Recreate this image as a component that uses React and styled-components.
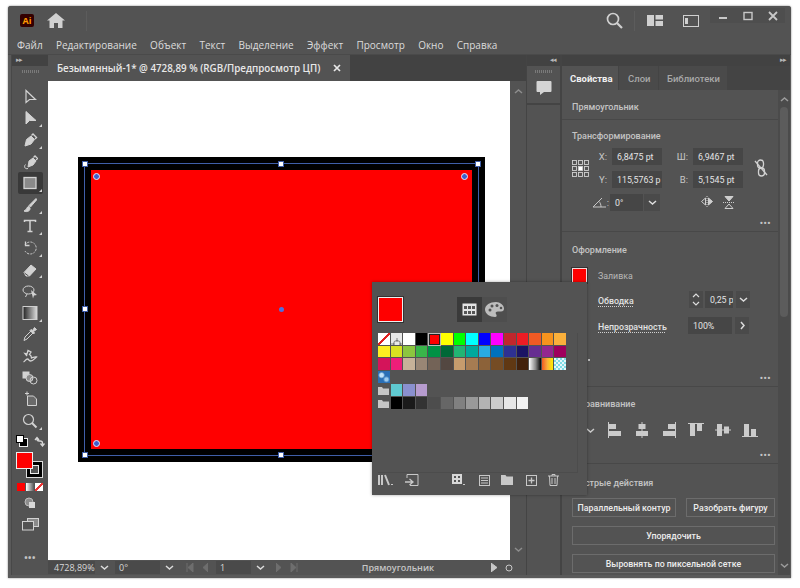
import React from 'react';
import styled, { createGlobalStyle } from 'styled-components';

const GlobalStyle = createGlobalStyle`
  html, body {
    margin: 0;
    padding: 0;
    background: #fff;
    font-family: "Open Sans", "Noto Sans", sans-serif;
  }
`;

const Page = styled.div`
  width: 800px;
  height: 588px;
  padding: 6px 0 0 8px;
  box-sizing: border-box;
  overflow: hidden;
`;

const Window = styled.div`
  position: relative;
  width: 783px;
  height: 572px;
  background: #5a5a5a;
  border-radius: 3px 3px 0 0;
  box-shadow: 0 0 2px rgba(0, 0, 0, 0.55);
  display: flex;
  flex-direction: column;
  overflow: hidden;
`;

const TitleBar = styled.div`
  height: 29px;
  display: flex;
  align-items: center;
  background: #535353;
  color: #d0d0d0;
  flex: none;
`;

const AiLogo = styled.div`
  width: 14px;
  height: 13px;
  margin-left: 12px;
  background: #330000;
  color: #ff9a00;
  border-radius: 2px;
  font-size: 9px;
  font-weight: 700;
  line-height: 13px;
  text-align: center;
`;

const HomeButton = styled.div`
  display: flex;
  margin-left: 13px;
`;

const TitleDivider = styled.div`
  width: 1px;
  height: 20px;
  background: #5c5c5c;
  margin-left: ${p => p.$left || 0}px;
`;

const TitleRight = styled.div`
  margin-left: auto;
  display: flex;
  align-items: center;
  height: 100%;
`;

const TitleIcon = styled.div`
  display: flex;
  margin-left: ${p => p.$left || 0}px;
`;

const WindowButtons = styled.div`
  display: flex;
  align-self: flex-start;
  margin: 2px 6px 0 11px;
  background: #4e4e4e;
`;

const WindowButton = styled.div`
  width: 25px;
  height: 15px;
  display: flex;
  align-items: center;
  justify-content: center;
  color: #c8c8c8;
`;

const MenuBar = styled.div`
  height: 20px;
  flex: none;
  display: flex;
  align-items: center;
  gap: 13.300px;
  padding-left: 9px;
  background: #535353;
  border-bottom: 1px solid #4a4a4a;
  box-sizing: border-box;
`;

const MenuItem = styled.span`
  color: #dcdcdc;
  font-size: 10px;
  line-height: 1;
`;

const Workspace = styled.div`
  flex: 1;
  min-height: 0;
  display: flex;
  padding: 0 1px 3px 3px;
`;

const ToolPanel = styled.div`
  width: 37px;
  flex: none;
  display: flex;
  flex-direction: column;
  align-items: center;
  background: #535353;
  border-left: 1px solid #484848;
  box-sizing: border-box;
`;

const DockHeader = styled.div`
  height: 11px;
  width: 100%;
  flex: none;
  background: #424242;
  color: #b8b8b8;
  font-size: 7px;
  line-height: 10px;
  padding: 0 4px;
  box-sizing: border-box;
  text-align: ${p => p.$align || 'left'};
  letter-spacing: -1px;
`;

const Gripper = styled.div`
  width: 17px;
  height: 3px;
  margin: 4px auto 0;
  flex: none;
  background: repeating-linear-gradient(90deg, #7a7a7a 0 1px, transparent 1px 2px);
`;

const ToolList = styled.div`
  margin-top: 13px;
  display: flex;
  flex-direction: column;
  align-items: center;
`;

const Tool = styled.div`
  position: relative;
  width: 25px;
  height: 21.6px;
  flex: none;
  margin-top: ${p => p.$top || 0}px;
  display: flex;
  align-items: center;
  justify-content: center;
  color: #d2d2d2;
  border-radius: 2px;
  background: ${p => (p.$active ? '#393939' : 'transparent')};
  &::after {
    content: '';
    display: ${p => (p.$more ? 'block' : 'none')};
    position: absolute;
    right: 1px;
    bottom: 2px;
    width: 0;
    height: 0;
    border-left: 3px solid transparent;
    border-bottom: 3px solid #d2d2d2;
  }
`;

const ColorWidget = styled.div`
  position: relative;
  width: 28px;
  height: 40px;
  margin-top: 5px;
  flex: none;
`;

const SwapRow = styled.div`
  display: flex;
  justify-content: space-between;
  width: 29px;
  margin-top: 3px;
  color: #d8d8d8;
`;

const FillChip = styled.div`
  position: absolute;
  left: 0;
  top: 0;
  width: 15px;
  height: 15px;
  background: #f00;
  border: 1px solid #eee;
  z-index: 1;
`;

const StrokeChip = styled.div`
  position: absolute;
  left: 10px;
  top: 9px;
  width: 15px;
  height: 15px;
  background: #000;
  border: 1px solid #ddd;
  &::after {
    content: '';
    position: absolute;
    inset: 3px;
    background: #535353;
    border: 1px solid #eee;
  }
`;

const ModeRow = styled.div`
  display: flex;
  gap: 1px;
  margin-top: -9px;
`;

const ModeChip = styled.div`
  width: 8px;
  height: 8px;
  background: ${p => p.$fill};
`;

const Dots = styled.div`
  color: #c4c4c4;
  font-size: 9px;
  font-weight: 700;
  letter-spacing: 0.5px;
  line-height: 8px;
`;

const ToolDots = styled(Dots)`
  margin-top: auto;
  margin-bottom: 13px;
`;

const DocArea = styled.div`
  width: 478px;
  flex: none;
  display: flex;
  flex-direction: column;
`;

const DocTabs = styled.div`
  height: 26px;
  flex: none;
  display: flex;
  background: #424242;
`;

const DocTab = styled.div`
  width: 302px;
  display: flex;
  align-items: center;
  justify-content: space-between;
  padding: 0 9px;
  box-sizing: border-box;
  background: #535353;
  color: #e8e8e8;
  font-size: 9.800px;
  font-weight: 600;
  white-space: nowrap;
`;

const CanvasRow = styled.div`
  flex: 1;
  min-height: 0;
  display: flex;
`;

const Canvas = styled.div`
  position: relative;
  flex: 1;
  background: #fff;
`;

const ScrollBar = styled.div`
  width: ${p => p.$width}px;
  flex: none;
  display: flex;
  flex-direction: column;
  align-items: center;
  justify-content: space-between;
  padding: 5px 0;
  box-sizing: border-box;
  background: #535353;
  color: #8d8d8d;
`;

const ArtObject = styled.div`
  position: absolute;
  left: 30px;
  top: 76px;
  width: 407px;
  height: 305px;
  background: #000;
`;

const RedFill = styled.div`
  position: absolute;
  inset: 13px;
  background: #f00;
`;

const SelectionBox = styled.div`
  position: absolute;
  inset: 6px;
  border: 1px solid #3f5ea8;
`;

const Handle = styled.div`
  position: absolute;
  left: ${p => p.$x}%;
  top: ${p => p.$y}%;
  width: 6px;
  height: 6px;
  margin: -3.500px 0 0 -3.500px;
  background: #fff;
  border: 1px solid #3f5ea8;
  box-sizing: border-box;
`;

const CornerWidget = styled.div`
  position: absolute;
  left: ${p => p.$x}px;
  top: ${p => p.$y}px;
  width: 7px;
  height: 7px;
  border-radius: 50%;
  background: #3f5ecc;
  border: 1.500px solid #e6e9ff;
  box-sizing: border-box;
`;

const CenterPoint = styled.div`
  position: absolute;
  left: 50%;
  top: 50%;
  width: 5px;
  height: 5px;
  margin: -3px 0 0 -3px;
  border-radius: 50%;
  background: #4f6fe0;
`;

const StatusBar = styled.div`
  height: 15px;
  flex: none;
  display: flex;
  align-items: center;
  background: #535353;
  color: #d8d8d8;
  font-size: 9px;
`;

const StatusField = styled.div`
  width: ${p => p.$width}px;
  height: 13px;
  margin-left: ${p => p.$gap || 0}px;
  display: flex;
  align-items: center;
  padding-left: ${p => p.$pad || 4}px;
  box-sizing: border-box;
  background: #4a4a4a;
  flex: none;
`;

const StatusCaret = styled.div`
  width: ${p => p.$width || 17}px;
  height: 13px;
  margin-left: 1px;
  display: flex;
  align-items: center;
  justify-content: center;
  flex: none;
  color: #dcdcdc;
`;

const StatusNav = styled.div`
  display: flex;
  align-items: center;
  justify-content: ${p => p.$justify || 'center'};
  gap: 8px;
  width: ${p => p.$width}px;
  flex: none;
  color: ${p => p.$color || '#6e6e6e'};
`;

const StatusTitle = styled.div`
  flex: 1;
  text-align: center;
  color: #c6c6c6;
  font-size: 9px;
  font-weight: 600;
`;

const CommentDock = styled.div`
  width: 34px;
  flex: none;
  background: #535353;
  border-left: 1px solid #444;
  box-sizing: border-box;
`;

const CommentButton = styled.div`
  height: 30px;
  display: flex;
  align-items: center;
  justify-content: center;
  border-bottom: 2px solid #444;
  color: #d4d4d4;
`;

const DockGap = styled.div`
  width: 2px;
  flex: none;
  background: #444;
`;

const PropertiesDock = styled.div`
  flex: 1;
  min-width: 0;
  display: flex;
  flex-direction: column;
  background: #535353;
  font-family: Roboto, "Open Sans", sans-serif;
`;

const TabRow = styled.div`
  height: 24px;
  flex: none;
  display: flex;
  background: #444;
`;

const PanelTab = styled.div`
  width: ${p => p.$width}px;
  padding-left: ${p => p.$pad}px;
  box-sizing: border-box;
  display: flex;
  align-items: center;
  font-size: 9.500px;
  font-weight: ${p => (p.$active ? 700 : 500)};
  color: ${p => (p.$active ? '#f0f0f0' : '#a8a8a8')};
  background: ${p => (p.$active ? '#535353' : '#4a4a4a')};
  border-right: 1px solid #444;
`;

const PanelBody = styled.div`
  flex: 1;
  min-height: 0;
  display: flex;
  overflow: hidden;
`;

const PanelContent = styled.div`
  width: 216px;
  flex: none;
`;

const PanelScroll = styled.div`
  flex: 1;
  display: flex;
  flex-direction: column;
  align-items: center;
  justify-content: space-between;
  padding: 4px 0;
  box-sizing: border-box;
  background: #4b4b4b;
  color: #9c9c9c;
`;

const ScrollThumb = styled.div`
  width: 8px;
  height: 210px;
  border-radius: 4px;
  background: #5c5c5c;
  margin: 2px 0 auto;
`;

const Section = styled.section`
  height: ${p => p.$height}px;
  padding: ${p => p.$top || 9}px 0 0 10px;
  box-sizing: border-box;
  position: relative;
  border-bottom: ${p => (p.$last ? 'none' : '1px solid #484848')};
`;

const SectionTitle = styled.div`
  color: #c4c4c4;
  font-size: 9px;
  font-weight: 500;
  line-height: 13px;
`;

const SectionDots = styled(Dots)`
  position: absolute;
  right: 7px;
  bottom: ${p => p.$bottom || 4}px;
`;

const MoreTick = styled.div`
  position: absolute;
  left: 26px;
  top: 127px;
  width: 2px;
  height: 2px;
  background: #bbb;
`;

const TransformGrid = styled.div`
  display: grid;
  grid-template-columns: 22px 18px 50px 31px 50px 1fr;
  grid-template-rows: 17px 17px 17px;
  row-gap: 6px;
  margin-top: 5px;
  align-items: center;
`;

const Label = styled.span`
  grid-column: ${p => p.$col || 'auto'};
  justify-self: end;
  padding-right: ${p => p.$pad ?? 5}px;
  font-size: 9.500px;
  color: #c6c6c6;
`;

const InputBox = styled.div`
  height: 17px;
  flex: none;
  grid-column: ${p => p.$col || 'auto'};
  display: flex;
  align-items: center;
  padding-left: 5px;
  margin-left: ${p => p.$left || 0}px;
  box-sizing: border-box;
  background: #464646;
  color: #e4e4e4;
  font-size: 8.800px;
  white-space: nowrap;
  overflow: hidden;
  width: ${p => (p.$width ? `${p.$width}px` : 'auto')};
`;

const AnchorCell = styled.div`
  grid-row: 1 / span 2;
  grid-column: 1;
  align-self: center;
  display: flex;
  color: #cfcfcf;
`;

const LinkCell = styled.div`
  grid-row: 1 / span 2;
  grid-column: 6;
  display: flex;
  justify-content: center;
  color: #d2d2d2;
`;

const AngleCell = styled.div`
  grid-column: 1 / span 3;
  display: flex;
  align-items: center;
  justify-content: flex-end;
  padding-right: 2px;
  color: #c6c6c6;
`;

const FlipCell = styled.div`
  grid-column: 5;
  display: flex;
  justify-content: center;
  gap: 10px;
  color: #cfcfcf;
`;

const DarkSquare = styled.div`
  width: ${p => p.$width || 16}px;
  height: 17px;
  flex: none;
  margin-left: ${p => p.$gap || 1}px;
  display: flex;
  align-items: center;
  justify-content: center;
  background: #4a4a4a;
  color: #dcdcdc;
`;

const AppearanceRow = styled.div`
  display: flex;
  align-items: center;
  height: 17px;
  margin-top: ${p => p.$top || 0}px;
  margin-bottom: ${p => p.$gap || 0}px;
`;

const RowLabel = styled.span`
  width: 90px;
  margin: 3px 0 0 26px;
  flex: none;
  color: #e2e2e2;
  font-size: 8.800px;
  font-weight: 500;
  line-height: 12px;
  text-decoration: underline dotted #d0d0d0;
  text-underline-offset: 2px;
`;

const FillLabel = styled(RowLabel)`
  width: auto;
  color: #b8b8b8;
  font-weight: 400;
  text-decoration: none;
  margin: 0 0 0 11px;
`;

const FillSwatch = styled.div`
  width: 15px;
  height: 15px;
  background: #f00;
  border: 1px solid #f2d9d9;
  outline: 1px solid #333;
  box-sizing: border-box;
`;

const ListGlyph = styled.div`
  display: flex;
  height: 9px;
  margin-top: 1px;
  color: #d2d2d2;
`;

const AlignRow = styled.div`
  display: flex;
  align-items: center;
  gap: 11px;
  margin: 11px 0 0 13px;
  color: #cbcbcb;
`;

const ButtonRow = styled.div`
  display: flex;
  gap: 10px;
  margin-bottom: 9px;
`;

const ActionButton = styled.div`
  flex: ${p => p.$grow || 'none'};
  width: ${p => (p.$width ? `${p.$width}px` : 'auto')};
  height: 19px;
  display: flex;
  align-items: center;
  justify-content: center;
  box-sizing: border-box;
  border: 1px solid #6c6c6c;
  color: #ececec;
  font-size: 8.800px;
  font-weight: 500;
  white-space: nowrap;
`;

const ActionList = styled.div`
  width: 203px;
  margin-top: 8px;
`;

const SwatchPopup = styled.div`
  position: absolute;
  left: 364px;
  top: 276px;
  width: 215px;
  height: 213px;
  background: #535353;
  box-shadow: 0 0 3px rgba(0, 0, 0, 0.35);
  z-index: 5;
  display: flex;
  flex-direction: column;
  padding: 15px 9px 0 6px;
  box-sizing: border-box;
`;

const PopupTop = styled.div`
  display: flex;
  height: 25px;
  flex: none;
`;

const BigSwatch = styled.div`
  width: 25px;
  height: 25px;
  background: #f00;
  border: 1px solid #eee;
  outline: 1px solid #333;
  box-sizing: border-box;
`;

const ViewToggle = styled.div`
  width: 25px;
  height: 25px;
  margin-left: ${p => p.$gap || 0}px;
  display: flex;
  align-items: center;
  justify-content: center;
  background: ${p => (p.$active ? '#3a3a3a' : '#4e4e4e')};
  color: #d4d4d4;
`;

const SwatchArea = styled.div`
  height: 139px;
  flex: none;
  margin-top: 11px;
  border-right: 1px solid #4c4c4c;
  border-bottom: 1px solid #4c4c4c;
`;

const SwatchRow = styled.div`
  display: flex;
  height: 12.700px;
`;

const Swatch = styled.div`
  width: 12.600px;
  height: 12.700px;
  flex: none;
  box-sizing: border-box;
  position: relative;
  background: ${p => p.$fill};
  border: 1px solid #535353;
  border-width: 0 0.500px 0.500px 0;
`;

const CurrentSwatch = styled(Swatch)`
  background: #f00;
  border: 2px solid #222;
  outline: 1px solid #bbb;
  outline-offset: -1px;
`;

const FolderRow = styled.div`
  display: flex;
  align-items: center;
  height: 13px;
`;

const FolderSlot = styled.div`
  width: 12.600px;
  display: flex;
  color: #c6c6c6;
  flex: none;
`;

const PopupFooter = styled.div`
  flex: 1;
  display: flex;
  align-items: center;
  color: #c8c8c8;
  padding-bottom: 9px;
`;

const FooterIcon = styled.div`
  display: flex;
  flex: none;
  margin-left: ${p => p.$gap}px;
`;

const menuItems = ['Файл', 'Редактирование', 'Объект', 'Текст', 'Выделение', 'Эффект', 'Просмотр', 'Окно', 'Справка'];

const swatchRows = [
  [null, null, '#ffffff', '#000000', null, '#ffff00', '#00ff00', '#00ffff', '#0000ff', '#ff00ff', '#c1272d', '#ed1c24', '#f15a24', '#f7931e', '#fbb03b'],
  ['#fcee21', '#d9e021', '#8cc63f', '#39b54a', '#009245', '#006837', '#22b573', '#00a99d', '#29abe2', '#0071bc', '#2e3192', '#1b1464', '#662d91', '#93278f', '#9e005d'],
  ['#d4145a', '#ed1e79', '#c7b299', '#998675', '#736357', '#534741', '#c69c6d', '#a67c52', '#8c6239', '#754c24', '#603813', '#42210b', 'linear-gradient(90deg,#fff,#888 55%,#000)', 'linear-gradient(90deg,#f15a24,#fbb03b 50%,#ffee00)', 'repeating-conic-gradient(#7fdde6 0 25%,#e6f8fa 0 50%) 0 0/4px 4px'],
];

const groupOne = ['#5fc9d0', '#8a90cf', '#b79ccf'];
const groupTwo = ['#000000', '#1a1a1a', '#333333', '#4d4d4d', '#666666', '#808080', '#999999', '#b3b3b3', '#cccccc', '#e6e6e6', '#f2f2f2'];

const Svg = ({ w = 16, h = 16, children, box }) => (
  <svg width={w} height={h} viewBox={box || `0 0 ${w} ${h}`} fill="none" stroke="currentColor" strokeWidth="1">
    {children}
  </svg>
);

const tools = [
  { more: false, icon: <Svg><path d="M4 1.500v12l3.500-3h6z" strokeWidth="1.200" /></Svg> },
  { more: true, icon: <Svg><path d="M4 1.500v12.500l3.500-3.500h6.500z" fill="currentColor" /></Svg> },
  { more: true, icon: <Svg><path d="M3 14l1.500-6.500L9 4l3.500 3.500L9 12z" fill="currentColor" /><path d="M9.500 3.500L11 2l3.500 3.500L13 7" strokeWidth="1.400" /></Svg> },
  { more: false, icon: <Svg><path d="M6 14.500c-3 1-4.500-2-2.500-4" /><path d="M6 13l1-6 4-3 3 3-3 4z" fill="currentColor" /><path d="M11.500 3.500L13 2l2.500 2.500L14 6" strokeWidth="1.300" /></Svg> },
  { more: true, active: true, icon: <Svg><rect x="2" y="2.500" width="12" height="11" fill="#8a8a8a" strokeWidth="1.300" /></Svg> },
  { more: true, icon: <Svg><path d="M14 1.500L7 8.500l1.500 1.500 6-7z" fill="currentColor" /><path d="M7 9.500c-2.500 0-2 3.500-5 4.500 3 1.500 6.500 0 6-3z" fill="currentColor" /></Svg> },
  { more: true, icon: <Svg><path d="M2.500 4V2.500h11V4M8 2.500v11M5.500 13.500h5" strokeWidth="1.500" /></Svg> },
  { more: true, icon: <Svg><path d="M3 5a6 6 0 1 1 0 6" strokeDasharray="2 1.200" /><path d="M3.500 1.500v4h4" strokeWidth="1.300" /></Svg> },
  { more: true, icon: <Svg><path d="M2 10.500L9 3l5 4-6.500 7H4z" fill="currentColor" /><path d="M2.500 11l4 3" stroke="#535353" /></Svg> },
  { more: false, icon: <Svg><ellipse cx="6.500" cy="7" rx="5.500" ry="4" /><path d="M5 11l-1.500 3" /><path d="M9 7l6 5-3 .5-1 3z" fill="currentColor" stroke="none" /></Svg> },
  { more: true, icon: <svg width="16" height="16" viewBox="0 0 16 16"><defs><linearGradient id="toolGrad"><stop offset="0" stopColor="#222" /><stop offset="1" stopColor="#ddd" /></linearGradient></defs><rect x="1" y="1.500" width="14" height="13" fill="url(#toolGrad)" stroke="#cfcfcf" /></svg> },
  { more: false, icon: <Svg><path d="M2 14.500l1-3.500 6-6 2 2-6 6z" /><path d="M9 3.500l1.500 1 2-3 2 2-3 2 1 1.500-1 1-3.500-3.500z" fill="currentColor" /></Svg> },
  { more: false, icon: <Svg><path d="M1.500 14c2-1 2-3 4-3 1.500 0 1 2 3 2 2.500 0 4-2 6-4-2-.5-3 .5-5 1 0-2-1-3-2-3.500L9 4 6 2.500 5 6 3 5.500 5 8" strokeWidth="1.300" /></Svg> },
  { more: false, icon: <Svg><rect x="1" y="2" width="6" height="6" fill="currentColor" /><circle cx="7.500" cy="8" r="3.500" fill="#8a8a8a" /><circle cx="11.500" cy="10.500" r="3.500" /></Svg> },
  { more: false, icon: <Svg><path d="M5 .5v4M3 2.500h4" /><path d="M5.500 5h6l3 3v6.500H5.500z" fill="#6a6a6a" /></Svg> },
  { more: true, icon: <Svg><circle cx="6.500" cy="6.500" r="5" strokeWidth="1.200" /><path d="M10 10l4.500 4.500" strokeWidth="2" /></Svg> },
];

const alignIcons = [
  <Svg key="a"><path d="M1.500 0v16" /><rect x="2" y="2" width="7" height="5" fill="currentColor" stroke="none" /><rect x="2" y="9" width="12" height="5" fill="currentColor" stroke="none" /></Svg>,
  <Svg key="b"><path d="M8 0v16" /><rect x="4.500" y="2" width="7" height="5" fill="currentColor" stroke="none" /><rect x="2" y="9" width="12" height="5" fill="currentColor" stroke="none" /></Svg>,
  <Svg key="c"><path d="M14.500 0v16" /><rect x="7" y="2" width="7" height="5" fill="currentColor" stroke="none" /><rect x="2" y="9" width="12" height="5" fill="currentColor" stroke="none" /></Svg>,
  <Svg key="d"><path d="M0 1.500h16" /><rect x="2" y="2" width="5" height="12" fill="currentColor" stroke="none" /><rect x="9" y="2" width="5" height="7" fill="currentColor" stroke="none" /></Svg>,
  <Svg key="e"><path d="M0 8h16" /><rect x="2" y="2" width="5" height="12" fill="currentColor" stroke="none" /><rect x="9" y="4.500" width="5" height="7" fill="currentColor" stroke="none" /></Svg>,
  <Svg key="f"><path d="M0 14.500h16" /><rect x="2" y="2" width="5" height="12" fill="currentColor" stroke="none" /><rect x="9" y="7" width="5" height="7" fill="currentColor" stroke="none" /></Svg>,
];

const Chevron = ({ dir = 'down' }) => {
  const paths = {
    down: 'M2 4l3.500 3L9 4',
    up: 'M2 7l3.500-3L9 7',
    right: 'M4 2l3 3.500L4 9',
  };
  return (
    <Svg w={11} h={11}>
      <path d={paths[dir]} strokeWidth="1.500" />
    </Svg>
  );
};

const FolderIcon = () => (
  <svg width="11" height="11" viewBox="0 0 11 11">
    <path d="M0 2h4l1 1.500h6V10H0z" fill="currentColor" />
  </svg>
);

const App = () => {
  return (
    <Page>
      <GlobalStyle />
      <Window>
        <TitleBar>
          <AiLogo>Ai</AiLogo>
          <HomeButton>
            <svg width="18" height="15" viewBox="0 0 18 15">
              <path d="M9 0L0 7.500h2.500V15h4.500v-5h4v5h4.500V7.500H18z" fill="currentColor" />
            </svg>
          </HomeButton>
          <TitleDivider $left={21} />
          <TitleRight>
            <Svg w={17} h={17}>
              <circle cx="7" cy="7" r="5.500" strokeWidth="1.700" />
              <path d="M11 11l5 5" strokeWidth="2.200" />
            </Svg>
            <TitleDivider $left={11} />
            <TitleIcon $left={12}>
              <svg width="16" height="11" viewBox="0 0 16 11">
                <rect width="7" height="11" fill="currentColor" />
                <rect x="8.500" width="7.500" height="4.500" fill="currentColor" />
                <rect x="8.500" y="6" width="7.500" height="5" fill="currentColor" />
              </svg>
            </TitleIcon>
            <TitleIcon $left={20}>
              <svg width="16" height="12" viewBox="0 0 16 12" fill="none" stroke="currentColor">
                <rect x=".5" y=".5" width="15" height="11" />
                <rect x="2" y="3" width="3" height="6" fill="currentColor" stroke="none" />
              </svg>
            </TitleIcon>
            <WindowButtons>
              <WindowButton><Svg w={10} h={10}><path d="M1 7h8" strokeWidth="2" /></Svg></WindowButton>
              <WindowButton><Svg w={10} h={10}><rect x="1" y="1.500" width="8" height="7" strokeWidth="1.400" /></Svg></WindowButton>
              <WindowButton><Svg w={10} h={10}><path d="M1 1l8 8M9 1l-8 8" strokeWidth="1.800" /></Svg></WindowButton>
            </WindowButtons>
          </TitleRight>
        </TitleBar>

        <MenuBar>
          {menuItems.map(item => (
            <MenuItem key={item}>{item}</MenuItem>
          ))}
        </MenuBar>

        <Workspace>
          <ToolPanel>
            <DockHeader>▸▸</DockHeader>
            <Gripper />
            <ToolList>
              {tools.map((tool, index) => (
                <Tool key={index} $active={tool.active} $more={tool.more}>
                  {tool.icon}
                </Tool>
              ))}
            </ToolList>
            <SwapRow>
              <svg width="12" height="12" viewBox="0 0 12 12">
                <rect x="3.500" y="3.500" width="8" height="8" fill="#000" stroke="#eee" />
                <rect x=".5" y=".5" width="7" height="7" fill="#fff" stroke="#000" />
              </svg>
              <Svg w={11} h={12}>
                <path d="M1 5l2-2.500L5 5M3 3v1.500c0 1 1 1.500 2 1.500h1c1.500 0 2.500.5 2.500 2v1.500M6.500 8.500L8.500 11l2-2.500" strokeWidth="1.300" />
              </Svg>
            </SwapRow>
            <ColorWidget>
              <FillChip />
              <StrokeChip />
            </ColorWidget>
            <ModeRow>
              <ModeChip $fill="#f00" />
              <ModeChip $fill="linear-gradient(90deg,#fff,#555)" />
              <ModeChip $fill="linear-gradient(135deg,#fff 40%,#e33 40% 60%,#fff 60%)" />
            </ModeRow>
            <Tool $top={2}>
              <Svg w={12} h={12}>
                <circle cx="5" cy="5" r="4" fill="#8d8d8d" stroke="#bdbdbd" />
                <rect x="5" y="5" width="6" height="6" fill="#d8d8d8" stroke="none" />
              </Svg>
            </Tool>
            <Tool>
              <Svg w={17} h={13}>
                <rect x="5.500" y=".5" width="11" height="8" fill="#8a8a8a" />
                <rect x=".5" y="3.500" width="11" height="8.500" fill="#535353" />
              </Svg>
            </Tool>
            <ToolDots>•••</ToolDots>
          </ToolPanel>

          <DocArea>
            <DocTabs>
              <DocTab>
                Безымянный-1* @ 4728,89 % (RGB/Предпросмотр ЦП)
                <Svg w={8} h={8}><path d="M1 1l6 6M7 1L1 7" strokeWidth="1.700" /></Svg>
              </DocTab>
            </DocTabs>
            <CanvasRow>
              <Canvas>
                <ArtObject>
                  <RedFill />
                  <SelectionBox>
                    <Handle $x={0} $y={0} />
                    <Handle $x={50} $y={0} />
                    <Handle $x={100} $y={0} />
                    <Handle $x={0} $y={50} />
                    <Handle $x={100} $y={50} />
                    <Handle $x={0} $y={100} />
                    <Handle $x={50} $y={100} />
                    <Handle $x={100} $y={100} />
                    <CenterPoint />
                    <CornerWidget $x={8} $y={9} />
                    <CornerWidget $x={376} $y={9} />
                    <CornerWidget $x={8} $y={276} />
                  </SelectionBox>
                </ArtObject>
              </Canvas>
              <ScrollBar $width={16}>
                <Chevron dir="up" />
                <Chevron dir="down" />
              </ScrollBar>
            </CanvasRow>
            <StatusBar>
              <StatusField $width={47} $pad={6}>4728,89%</StatusField>
              <StatusCaret><Chevron /></StatusCaret>
              <StatusField $width={45} $gap={2}>0°</StatusField>
              <StatusCaret><Chevron /></StatusCaret>
              <StatusNav $width={38}>
                <Svg w={8} h={9}><path d="M1 0v9M7 0L2 4.500 7 9z" fill="currentColor" /></Svg>
                <Svg w={6} h={9}><path d="M6 0L1 4.500 6 9z" fill="currentColor" /></Svg>
              </StatusNav>
              <StatusField $width={35}>1</StatusField>
              <StatusCaret><Chevron /></StatusCaret>
              <StatusNav $width={36}>
                <Svg w={6} h={9}><path d="M0 0l5 4.500L0 9z" fill="currentColor" /></Svg>
                <Svg w={8} h={9}><path d="M7 0v9M1 0l5 4.500L1 9z" fill="currentColor" /></Svg>
              </StatusNav>
              <StatusTitle>Прямоугольник</StatusTitle>
              <StatusNav $width={26} $justify="flex-start" $color="#c8c8c8">
                <Svg w={6} h={9}><path d="M0 0l6 4.500L0 9z" fill="currentColor" /></Svg>
                <Svg w={8} h={8}><circle cx="4" cy="4" r="3" /></Svg>
              </StatusNav>
              <StatusNav $width={9} />
            </StatusBar>
          </DocArea>

          <CommentDock>
            <DockHeader $align="right">◂◂</DockHeader>
            <Gripper />
            <CommentButton>
              <svg width="16" height="16" viewBox="0 0 16 16">
                <path d="M1.500 1h13a1 1 0 0 1 1 1v9a1 1 0 0 1-1 1H8l-4 3v-3H1.500a1 1 0 0 1-1-1V2a1 1 0 0 1 1-1z" fill="currentColor" />
              </svg>
            </CommentButton>
          </CommentDock>
          <DockGap />

          <PropertiesDock>
            <DockHeader $align="right">▸▸</DockHeader>
            <TabRow>
              <PanelTab $active $width={57} $pad={8}>Свойства</PanelTab>
              <PanelTab $width={40} $pad={9}>Слои</PanelTab>
              <PanelTab $width={69} $pad={8}>Библиотеки</PanelTab>
            </TabRow>
            <PanelBody>
              <PanelContent>
                <Section $height={30} $top={11}>
                  <SectionTitle>Прямоугольник</SectionTitle>
                </Section>
                <Section $height={112} $top={10}>
                  <SectionTitle>Трансформирование</SectionTitle>
                  <TransformGrid>
                    <AnchorCell>
                      <svg width="18" height="17" viewBox="0 0 18 17" fill="none" stroke="currentColor" strokeWidth=".9">
                        {[0, 6, 12].map(y =>
                          [0, 6, 12].map(x => (
                            <rect key={`${x}-${y}`} x={x + 0.5} y={y + 0.5} width="4" height="4" fill={x === 6 && y === 6 ? '#fff' : 'none'} />
                          ))
                        )}
                      </svg>
                    </AnchorCell>
                    <LinkCell>
                      <svg width="14" height="18" viewBox="0 0 14 18" fill="none" stroke="currentColor" strokeWidth="1.300">
                        <rect x="3.500" y="1" width="6" height="8" rx="3" />
                        <rect x="4.500" y="9" width="6" height="8" rx="3" />
                        <path d="M1 2l12 14" />
                      </svg>
                    </LinkCell>
                    <Label $col={2}>X:</Label>
                    <InputBox $col={3}>6,8475 pt</InputBox>
                    <Label $col={4}>Ш:</Label>
                    <InputBox $col={5}>6,9467 pt</InputBox>
                    <Label $col={2}>Y:</Label>
                    <InputBox $col={3}>115,5763 p</InputBox>
                    <Label $col={4}>В:</Label>
                    <InputBox $col={5}>5,1545 pt</InputBox>
                    <AngleCell>
                      <Svg w={15} h={11}><path d="M14 10H1L10 1M7 4.500c1.300 1.300 2 3 2 5.500" /></Svg>
                      <Label $pad={1}>:</Label>
                      <InputBox $width={33}>0°</InputBox>
                      <DarkSquare><Chevron /></DarkSquare>
                    </AngleCell>
                    <FlipCell>
                      <Svg w={12} h={11}><path d="M6 0v11" strokeDasharray="1 1" /><path d="M4.500 2L.5 5.500l4 3.500z" /><path d="M7.500 2l4 3.500-4 3.500z" fill="currentColor" /></Svg>
                      <Svg w={12} h={13}><path d="M0 6.500h12" strokeDasharray="1 1" /><path d="M2 .5h8L6 5z" fill="currentColor" /><path d="M2 12.500h8L6 8z" /></Svg>
                    </FlipCell>
                  </TransformGrid>
                  <SectionDots>•••</SectionDots>
                </Section>
                <Section $height={155} $top={12}>
                  <SectionTitle>Оформление</SectionTitle>
                  <AppearanceRow $top={10}>
                    <FillSwatch />
                    <FillLabel>Заливка</FillLabel>
                  </AppearanceRow>
                  <ListGlyph>
                    <Svg w={11} h={9}><path d="M3.500 1.500H11M3.500 4.500H11M3.500 7.500H11M0 1.500h2M0 4.500h2M0 7.500h2" /></Svg>
                  </ListGlyph>
                  <AppearanceRow $gap={9} $top={-3}>
                    <RowLabel>Обводка</RowLabel>
                    <DarkSquare $width={14}>
                      <Svg w={10} h={15}><path d="M2 5l3-3 3 3M2 10l3 3 3-3" strokeWidth="1.200" /></Svg>
                    </DarkSquare>
                    <InputBox $width={28} $left={2}>0,25 p</InputBox>
                    <DarkSquare $width={14} $gap={3}><Chevron /></DarkSquare>
                  </AppearanceRow>
                  <AppearanceRow>
                    <RowLabel>Непрозрачность</RowLabel>
                    <InputBox $width={44}>100%</InputBox>
                    <DarkSquare $width={14} $gap={3}><Chevron dir="right" /></DarkSquare>
                  </AppearanceRow>
                  <MoreTick />
                  <SectionDots>•••</SectionDots>
                </Section>
                <Section $height={77} $top={11}>
                  <SectionTitle>Выравнивание</SectionTitle>
                  <AlignRow>
                    <Chevron />
                    {alignIcons}
                  </AlignRow>
                  <SectionDots>•••</SectionDots>
                </Section>
                <Section $height={120} $top={13} $last>
                  <SectionTitle>Быстрые действия</SectionTitle>
                  <ActionList>
                    <ButtonRow>
                      <ActionButton $width={104}>Параллельный контур</ActionButton>
                      <ActionButton $grow="1">Разобрать фигуру</ActionButton>
                    </ButtonRow>
                    <ButtonRow>
                      <ActionButton $grow="1">Упорядочить</ActionButton>
                    </ButtonRow>
                    <ButtonRow>
                      <ActionButton $grow="1">Выровнять по пиксельной сетке</ActionButton>
                    </ButtonRow>
                  </ActionList>
                </Section>
              </PanelContent>
              <PanelScroll>
                <Chevron dir="up" />
                <ScrollThumb />
                <Chevron dir="down" />
              </PanelScroll>
            </PanelBody>
          </PropertiesDock>
        </Workspace>

        <SwatchPopup>
          <PopupTop>
            <BigSwatch />
            <ViewToggle $active $gap={54}>
              <Svg w={15} h={13}>
                <rect x=".5" y=".5" width="14" height="12" fill="#e4e4e4" stroke="none" />
                <path d="M2 8h3v3H2zM6 8h3v3H6zM10 8h3v3h-3zM2 3h3v3H2zM6 3h3v3H6zM10 3h3v3h-3z" fill="#555" stroke="none" />
              </Svg>
            </ViewToggle>
            <ViewToggle>
              <svg width="19" height="15" viewBox="0 0 19 15">
                <path d="M11 0C5 0 0 3 0 7.500S5 15 10 15c2 0 2-2 1-3-1-1.500 0-2.500 2-2.500h3c2 0 3-1 3-3C19 3 15 0 11 0z" fill="#bdbdbd" />
                <circle cx="5" cy="8" r="1.500" fill="#535353" />
                <circle cx="7" cy="4" r="1.500" fill="#535353" />
                <circle cx="12" cy="3.500" r="1.500" fill="#535353" />
                <circle cx="16" cy="6" r="1.300" fill="#535353" />
              </svg>
            </ViewToggle>
          </PopupTop>
          <SwatchArea>
            {swatchRows.map((row, rowIndex) => (
              <SwatchRow key={rowIndex}>
                {row.map((fill, index) => {
                  if (rowIndex === 0 && index === 0) return <Swatch key={index} $fill="linear-gradient(135deg,#fff 44%,#e02020 44% 56%,#fff 56%)" />;
                  if (rowIndex === 0 && index === 1) {
                    return (
                      <Swatch key={index} $fill="#e8e8e8">
                        <svg width="12" height="12" viewBox="0 0 12 12" fill="none" stroke="#555" strokeWidth=".7">
                          <circle cx="6" cy="6" r="3.500" />
                          <path d="M0 6h4M8 6h4M6 0v4M6 8v4" />
                        </svg>
                      </Swatch>
                    );
                  }
                  if (rowIndex === 0 && index === 4) return <CurrentSwatch key={index} />;
                  return <Swatch key={index} $fill={fill} />;
                })}
              </SwatchRow>
            ))}
            <SwatchRow>
              <Swatch $fill="radial-gradient(circle at 30% 35%,#bfe0f7 0 15%,transparent 30%),radial-gradient(circle at 70% 70%,#9ccbee 0 12%,transparent 28%),#2a6fb5" />
            </SwatchRow>
            <FolderRow>
              <FolderSlot><FolderIcon /></FolderSlot>
              {groupOne.map(fill => <Swatch key={fill} $fill={fill} />)}
            </FolderRow>
            <FolderRow>
              <FolderSlot><FolderIcon /></FolderSlot>
              {groupTwo.map(fill => <Swatch key={fill} $fill={fill} />)}
            </FolderRow>
          </SwatchArea>
          <PopupFooter>
            <FooterIcon $gap={0}>
              <Svg w={15} h={12}><path d="M1 1v10M4 1v10M7 1l4 10" strokeWidth="2" /><path d="M13 10.500h2" /></Svg>
            </FooterIcon>
            <FooterIcon $gap={12}>
              <Svg w={14} h={14}><path d="M2 5V1.500h11v11H5" /><path d="M0 9h7M4.500 6L8 9l-3.500 3" strokeWidth="1.300" /></Svg>
            </FooterIcon>
            <FooterIcon $gap={33}>
              <Svg w={13} h={12}>
                <rect x="0" y="0" width="10" height="10" fill="#d8d8d8" stroke="none" />
                <path d="M2 2h2v2H2zM6 2h2v2H6zM2 6h2v2H2zM6 6h2v2H6z" fill="#555" stroke="none" />
                <path d="M11 10.500h2" />
              </Svg>
            </FooterIcon>
            <FooterIcon $gap={14}>
              <Svg w={11} h={11}><rect x=".5" y=".5" width="10" height="10" /><path d="M2 3h7M2 5.500h7M2 8h7" /></Svg>
            </FooterIcon>
            <FooterIcon $gap={11}>
              <svg width="12" height="10" viewBox="0 0 12 10"><path d="M0 0h4.500l1 1.500H12V10H0z" fill="currentColor" /></svg>
            </FooterIcon>
            <FooterIcon $gap={13}>
              <Svg w={11} h={11}><rect x=".5" y=".5" width="10" height="10" /><path d="M5.500 2.500v6M2.500 5.500h6" strokeWidth="1.300" /></Svg>
            </FooterIcon>
            <FooterIcon $gap={11}>
              <Svg w={11} h={12}><path d="M0 2h11M4 2V.5h3V2M1.500 2l.5 9.500h7l.5-9.500M4 4v6M7 4v6" /></Svg>
            </FooterIcon>
          </PopupFooter>
        </SwatchPopup>
      </Window>
    </Page>
  );
};

export default App;
